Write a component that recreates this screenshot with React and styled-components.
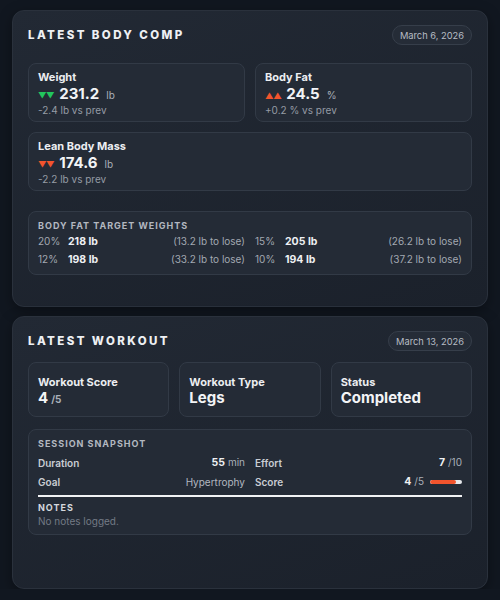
import styled, { createGlobalStyle } from "styled-components";

const GlobalStyle = createGlobalStyle`
  html, body {
    margin: 0;
    padding: 0;
    background: #111720;
    font-family: Inter, "Noto Sans", "Liberation Sans", sans-serif;
    color: #eef0f3;
  }
  * { box-sizing: border-box; }
`;

const targets = [
  [
    { pct: "20%", weight: "218 lb", lose: "(13.2 lb to lose)" },
    { pct: "15%", weight: "205 lb", lose: "(26.2 lb to lose)" },
  ],
  [
    { pct: "12%", weight: "198 lb", lose: "(33.2 lb to lose)" },
    { pct: "10%", weight: "194 lb", lose: "(37.2 lb to lose)" },
  ],
];

const App = () => {
  return (
    <Page>
      <GlobalStyle />
      <Card $height={297}>
        <Header $gap={18}>
          <Title>Latest Body Comp</Title>
          <DatePill>March 6, 2026</DatePill>
        </Header>
        <StatGrid>
          <StatBox>
            <StatLabel>Weight</StatLabel>
            <StatValue>
              <Arrows $color="#22c55e">▼▼</Arrows>
              <Big>231.2</Big>
              <Unit>lb</Unit>
            </StatValue>
            <Delta>-2.4 lb vs prev</Delta>
          </StatBox>
          <StatBox>
            <StatLabel>Body Fat</StatLabel>
            <StatValue>
              <Arrows $color="#f2542d">▲▲</Arrows>
              <Big>24.5</Big>
              <Unit>%</Unit>
            </StatValue>
            <Delta>+0.2 % vs prev</Delta>
          </StatBox>
          <StatBox $wide>
            <StatLabel>Lean Body Mass</StatLabel>
            <StatValue>
              <Arrows $color="#f2542d">▼▼</Arrows>
              <Big>174.6</Big>
              <Unit>lb</Unit>
            </StatValue>
            <Delta>-2.2 lb vs prev</Delta>
          </StatBox>
        </StatGrid>
        <Panel $top={20} $bottom={3}>
          <SectionLabel $gap={3}>Body Fat Target Weights</SectionLabel>
          {targets.map((row, i) => (
            <TwoCol key={i}>
              {row.map((t) => (
                <TargetRow key={t.pct}>
                  <Pct>{t.pct}</Pct>
                  <Strong>{t.weight}</Strong>
                  <Lose>{t.lose}</Lose>
                </TargetRow>
              ))}
            </TwoCol>
          ))}
        </Panel>
      </Card>

      <Card $height={273}>
        <Header $gap={11}>
          <Title>Latest Workout</Title>
          <DatePill>March 13, 2026</DatePill>
        </Header>
        <TileGrid>
          <Tile>
            <StatLabel>Workout Score</StatLabel>
            <TileValue>
              4<Unit>/5</Unit>
            </TileValue>
          </Tile>
          <Tile>
            <StatLabel>Workout Type</StatLabel>
            <TileValue>Legs</TileValue>
          </Tile>
          <Tile>
            <StatLabel>Status</StatLabel>
            <TileValue>Completed</TileValue>
          </Tile>
        </TileGrid>
        <Panel $top={12} $bottom={6}>
          <SectionLabel $gap={3}>Session Snapshot</SectionLabel>
          <TwoCol>
            <InfoRow>
              <InfoKey>Duration</InfoKey>
              <InfoVal>
                <Strong>55</Strong>
                <Unit>min</Unit>
              </InfoVal>
            </InfoRow>
            <InfoRow>
              <InfoKey>Effort</InfoKey>
              <InfoVal>
                <Strong>7</Strong>
                <Unit>/10</Unit>
              </InfoVal>
            </InfoRow>
          </TwoCol>
          <TwoCol>
            <InfoRow>
              <InfoKey>Goal</InfoKey>
              <Plain>Hypertrophy</Plain>
            </InfoRow>
            <InfoRow>
              <InfoKey>Score</InfoKey>
              <InfoVal>
                <Strong>4</Strong>
                <Unit>/5</Unit>
                <Bar>
                  <BarFill style={{ width: `${(4 / 5) * 100}%` }} />
                </Bar>
              </InfoVal>
            </InfoRow>
          </TwoCol>
          <Divider />
          <NotesLabel>Notes</NotesLabel>
          <Muted>No notes logged.</Muted>
        </Panel>
      </Card>
    </Page>
  );
};

export default App;

/* ---------------------------- STYLED COMPONENTS --------------------------- */

const Page = styled.div`
  width: 500px;
  padding: 10px 12px 0;
  display: flex;
  flex-direction: column;
  gap: 9px;
`;

const Card = styled.section`
  height: ${(p) => p.$height}px;
  padding: 15px 15px;
  border-radius: 12px;
  border: 1px solid #2a313c;
  background: linear-gradient(160deg, #222934 0%, #1b212b 100%);
  box-shadow: 0 4px 14px rgba(0, 0, 0, 0.35);
`;

const Header = styled.div`
  display: flex;
  align-items: center;
  justify-content: space-between;
  height: 20px;
  margin: -1px 0 ${(p) => p.$gap}px;
`;

const Title = styled.h2`
  margin: 0;
  font-size: 11.5px;
  font-weight: 800;
  letter-spacing: 2.4px;
  text-transform: uppercase;
  color: #eef0f3;
`;

const DatePill = styled.span`
  height: 20px;
  display: inline-flex;
  align-items: center;
  padding: 0 7px;
  border-radius: 10px;
  border: 1px solid #363e4a;
  background: #252c37;
  font-size: 9.3px;
  color: #b7bcc4;
`;

const StatGrid = styled.div`
  display: grid;
  grid-template-columns: 1fr 1fr;
  gap: 10px;
`;

const StatBox = styled.div`
  grid-column: ${(p) => (p.$wide ? "1 / -1" : "auto")};
  height: 59px;
  padding: 6px 9px;
  border-radius: 8px;
  border: 1px solid #323a46;
  background: #242b36;
`;

const StatLabel = styled.div`
  font-size: 11px;
  font-weight: 700;
  line-height: 14px;
  color: #eceef1;
`;

const StatValue = styled.div`
  display: flex;
  align-items: baseline;
  gap: 4px;
  height: 19px;
`;

const Arrows = styled.span`
  font-size: 8.5px;
  letter-spacing: -0.5px;
  color: ${(p) => p.$color};
  margin-right: 1px;
`;

const Big = styled.span`
  font-size: 15px;
  font-weight: 700;
  color: #f3f4f6;
`;

const Unit = styled.span`
  font-size: 10px;
  color: #aab0b9;
  margin-left: 3px;
`;

const Delta = styled.div`
  font-size: 10px;
  line-height: 14px;
  color: #959ba5;
`;

const Panel = styled.div`
  margin-top: ${(p) => p.$top}px;
  padding: 8px 9px ${(p) => p.$bottom}px;
  border-radius: 8px;
  border: 1px solid #323a46;
  background: #242b36;
`;

const SectionLabel = styled.div`
  font-size: 9px;
  font-weight: 700;
  letter-spacing: 1px;
  line-height: 12px;
  text-transform: uppercase;
  color: #b3b8c0;
  margin-bottom: ${(p) => p.$gap}px;
`;

const TwoCol = styled.div`
  display: grid;
  grid-template-columns: 1fr 1fr;
  gap: 10px;
`;

const TargetRow = styled.div`
  display: flex;
  align-items: baseline;
  height: 18px;
  font-size: 10px;
`;

const Pct = styled.span`
  width: 30px;
  color: #a2a8b1;
`;

const Strong = styled.span`
  font-weight: 700;
  color: #eef0f3;
  font-size: 10.5px;
`;

const Lose = styled.span`
  margin-left: auto;
  color: #a2a8b1;
`;

const TileGrid = styled.div`
  display: grid;
  grid-template-columns: repeat(3, 1fr);
  gap: 10px;
`;

const Tile = styled.div`
  height: 55px;
  padding: 12px 9px;
  border-radius: 8px;
  border: 1px solid #323a46;
  background: #242b36;
`;

const TileValue = styled.div`
  font-size: 15px;
  font-weight: 700;
  line-height: 18px;
  color: #f3f4f6;
  display: flex;
  align-items: baseline;
`;

const InfoRow = styled.div`
  display: flex;
  align-items: center;
  justify-content: space-between;
  height: 19px;
`;

const InfoKey = styled.span`
  font-size: 10px;
  font-weight: 600;
  color: #c9cdd3;
`;

const InfoVal = styled.span`
  display: flex;
  align-items: baseline;
`;

const Plain = styled.span`
  font-size: 10px;
  color: #b3b8c0;
`;

const Bar = styled.span`
  display: inline-block;
  align-self: center;
  width: 32px;
  height: 4px;
  margin-left: 6px;
  border-radius: 2px;
  background: #e6e8eb;
  overflow: hidden;
`;

const BarFill = styled.span`
  display: block;
  height: 100%;
  background: #f2542d;
  border-radius: 2px;
`;

const Divider = styled.div`
  height: 1.5px;
  background: #f1f2f4;
  margin: 4px 0 5px;
`;

const NotesLabel = styled.div`
  font-size: 9px;
  font-weight: 700;
  letter-spacing: 1px;
  text-transform: uppercase;
  color: #d5d8dd;
  line-height: 12px;
`;

const Muted = styled.div`
  font-size: 10px;
  line-height: 14px;
  color: #737a85;
`;
